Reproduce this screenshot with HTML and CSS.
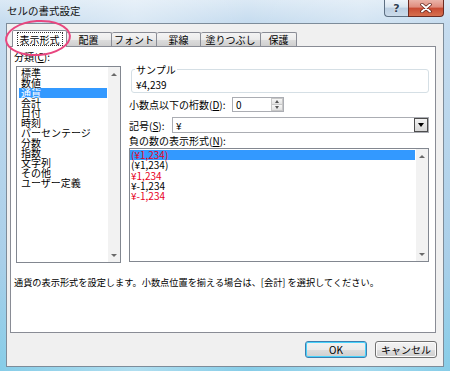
FILE: index.html
```html
<!DOCTYPE html>
<html lang="ja">
<head>
<meta charset="utf-8">
<title>セルの書式設定</title>
<link rel="stylesheet" href="styles.css">
</head>
<body>
<div class="window">
  <div class="titlebar">
    <span class="title">セルの書式設定</span>
    <div class="caption-buttons">
      <div class="cap-btn help">?</div>
      <div class="cap-btn close">
        <svg width="14" height="10" viewBox="0 0 14 10"><path d="M3 1.5 L11 8.5 M11 1.5 L3 8.5" stroke="#5a1c14" stroke-width="3.4" stroke-linecap="round"/><path d="M3 1.5 L11 8.5 M11 1.5 L3 8.5" stroke="#ffffff" stroke-width="2" stroke-linecap="round"/></svg>
      </div>
    </div>
  </div>
  <div class="client">
    <div class="tabs">
      <div class="tab active t1"><span class="focus">表示形式</span></div>
      <div class="tab t2">配置</div>
      <div class="tab t3">フォント</div>
      <div class="tab t4">罫線</div>
      <div class="tab t5">塗りつぶし</div>
      <div class="tab t6">保護</div>
    </div>
    <div class="panel">
      <div class="cols">
        <div class="left">
          <div class="label">分類(<u>C</u>):</div>
          <div class="listbox cat">
            <ul class="items">
              <li>標準</li>
              <li>数値</li>
              <li class="sel">通貨</li>
              <li>会計</li>
              <li>日付</li>
              <li>時刻</li>
              <li>パーセンテージ</li>
              <li>分数</li>
              <li>指数</li>
              <li>文字列</li>
              <li>その他</li>
              <li>ユーザー定義</li>
            </ul>
            <div class="vscroll"><span class="arr up"></span><span class="arr down"></span></div>
          </div>
        </div>
        <div class="right">
          <fieldset class="sample">
            <legend>サンプル</legend>
            <div class="sample-val">¥4,239</div>
          </fieldset>
          <div class="row decimals">
            <span class="rlabel">小数点以下の桁数(<u>D</u>):</span>
            <div class="spin">
              <span class="spin-val">0</span>
              <div class="spin-btns"><span class="sb"><span class="arr up"></span></span><span class="sb"><span class="arr down"></span></span></div>
            </div>
          </div>
          <div class="row symbol">
            <span class="rlabel">記号(<u>S</u>):</span>
            <div class="combo">
              <span class="combo-val">¥</span>
              <div class="drop"><span class="tri"></span></div>
            </div>
          </div>
          <div class="label neg-label">負の数の表示形式(<u>N</u>):</div>
          <div class="listbox neg">
            <ul class="items">
              <li class="sel red">(¥1,234)</li>
              <li>(¥1,234)</li>
              <li class="red">¥1,234</li>
              <li>¥-1,234</li>
              <li class="red">¥-1,234</li>
            </ul>
            <div class="vscroll"><span class="arr up"></span><span class="arr down"></span></div>
          </div>
        </div>
      </div>
      <p class="desc">通貨の表示形式を設定します。小数点位置を揃える場合は、[会計] を選択してください。</p>
    </div>
    <div class="buttons">
      <div class="btn default">OK</div>
      <div class="btn">キャンセル</div>
    </div>
  </div>
  <div class="ellipse"></div>
</div>
</body>
</html>
```
FILE: styles.css
```css
* { box-sizing: border-box; }
html, body { margin: 0; padding: 0; }
body {
  width: 450px;
  height: 371px;
  overflow: hidden;
  font-family: "Noto Sans CJK JP", "Noto Sans", sans-serif;
  font-size: 10px;
  color: #000;
}
.window {
  position: relative;
  width: 450px;
  height: 371px;
  display: flex;
  flex-direction: column;
  background:
    linear-gradient(90deg, rgba(255,255,255,0) 0, rgba(255,255,255,0.35) 30%, rgba(255,255,255,0) 55%, rgba(255,255,255,0.25) 80%, rgba(255,255,255,0) 100%),
    linear-gradient(180deg, #dbe9f5 0, #c6dcef 22px, #a9cfe9 70%, #86cde8 100%);
}
.titlebar {
  height: 23px;
  display: flex;
  align-items: flex-start;
  padding-left: 7px;
}
.title {
  margin-top: 5px;
  font-size: 10.5px;
  line-height: 12px;
  color: #111;
}
.caption-buttons {
  margin-left: auto;
  margin-right: 6px;
  display: flex;
}
.cap-btn {
  height: 17px;
  border: 1px solid #5d6f82;
  border-top: none;
  display: flex;
  align-items: center;
  justify-content: center;
}
.help {
  width: 24px;
  border-radius: 0 0 0 4px;
  border-right: none;
  background: linear-gradient(180deg, #eef4fa 0, #d9e5f0 45%, #bccfe2 50%, #cbdbea 100%);
  font-family: "DejaVu Sans", sans-serif;
  font-weight: bold;
  font-size: 11px;
  color: #2e3f52;
  text-shadow: 0 0 2px #fff;
}
.close {
  width: 36px;
  border-color: #6b2a22;
  border-radius: 0 0 4px 0;
  background: linear-gradient(180deg, #eab3a8 0, #df8c7c 45%, #c84a32 50%, #d6704f 100%);
}
.client {
  margin: 0 6px 0 6px;
  height: 344px;
  background: #f0f0f0;
  border: 1px solid #7d8c9a;
  display: flex;
  flex-direction: column;
}
.tabs {
  margin: 6px 0 0 5px;
  height: 16px;
  display: flex;
  align-items: flex-end;
  position: relative;
  z-index: 2;
}
.tab {
  height: 14px;
  border: 1px solid #898c95;
  border-bottom: none;
  border-left: none;
  background: linear-gradient(180deg, #f4f4f4 0, #ebebeb 50%, #dddddd 51%, #cfcfcf 100%);
  display: flex;
  align-items: center;
  justify-content: center;
  line-height: 11px;
  border-radius: 2px 2px 0 0;
}
.tab.active {
  height: 17px;
  margin-bottom: -1px;
  background: #ffffff;
  border-left: 1px solid #898c95;
  border-right: 1px solid #898c95;
  margin-right: -1px;
  position: relative;
  z-index: 3;
}
.focus {
  border: 1px dotted #333;
  padding: 1px 2px 0;
  line-height: 11px;
}
.t1 { width: 55px; }
.t2 { width: 46px; }
.t3 { width: 45px; }
.t4 { width: 44px; }
.t5 { width: 60px; }
.t6 { width: 36px; }
.panel {
  margin-left: 3px;
  width: 426px;
  height: 287px;
  background: #ffffff;
  border: 1px solid #898c95;
  padding: 4px 0 0 3px;
  position: relative;
  z-index: 1;
}
.cols {
  display: flex;
  gap: 8px;
}
.left { width: 107px; }
.right {
  width: 300px;
  padding-top: 13px;
  display: flex;
  flex-direction: column;
}
.label {
  line-height: 11px;
  height: 11px;
  white-space: nowrap;
}
u { text-decoration: underline; text-underline-offset: 1px; }
.listbox {
  position: relative;
  border: 1px solid #828790;
  background: #fff;
  display: flex;
}
.listbox.cat {
  margin: 4px 0 0 2px;
  width: 105px;
  height: 197px;
}
.listbox.neg {
  margin-top: 2px;
  width: 300px;
  height: 114px;
}
.items {
  list-style: none;
  margin: 0;
  padding: 1px 0 0;
  flex: 1;
}
.items li {
  line-height: 10px;
  height: 10px;
  padding-left: 2px;
  margin: 0 1px 0 2px;
  white-space: nowrap;
}
.listbox.neg .items li {
  margin: 0 1px 0 0;
  height: 10.3px;
  line-height: 10.3px;
  padding-left: 1px;
}
.items li.sel { background: #3399ff; color: #fff; }
.items li.red { color: #e8001c; }
.items li.sel.red { color: #e8001c; }
.vscroll {
  width: 12px;
  background: #f2f2f2;
  display: flex;
  flex-direction: column;
  justify-content: space-between;
  align-items: center;
  padding: 6px 0 5px;
}
.arr {
  width: 0;
  height: 0;
  border-left: 3px solid transparent;
  border-right: 3px solid transparent;
}
.arr.up { border-bottom: 3px solid #6a6a6a; }
.arr.down { border-top: 3px solid #6a6a6a; }
.sample {
  margin: 0 0 0 2px;
  width: 298px;
  border: 1px solid #d5dfe5;
  border-radius: 3px;
  padding: 6px 4px 2px;
}
.sample legend {
  padding: 0 1px;
  margin-left: -1px;
  line-height: 11px;
}
.sample-val { line-height: 10px; height: 10px; margin-top: -1px; }
.row {
  display: flex;
  align-items: center;
}
.rlabel { white-space: nowrap; line-height: 11px; }
.decimals { margin-top: 4px; height: 15px; }
.decimals .rlabel { width: 103px; }
.spin {
  width: 52px;
  height: 15px;
  border: 1px solid #abadb3;
  background: #fff;
  display: flex;
  align-items: center;
}
.spin-val { flex: 1; padding-left: 3px; line-height: 11px; }
.spin-btns {
  width: 12px;
  height: 13px;
  display: flex;
  flex-direction: column;
}
.sb {
  flex: 1;
  display: flex;
  align-items: center;
  justify-content: center;
  background: linear-gradient(180deg, #f7f7f7, #e2e2e2);
  border: 1px solid #c8c8c8;
}
.sb + .sb { border-top: none; }
.sb .arr { border-left-width: 2.5px; border-right-width: 2.5px; }
.sb .arr.up { border-bottom: 3px solid #555; }
.sb .arr.down { border-top: 3px solid #555; }
.symbol { margin-top: 5px; height: 16px; }
.symbol .rlabel { width: 43px; }
.combo {
  width: 257px;
  height: 16px;
  border: 1px solid #abadb3;
  background: #fff;
  display: flex;
  align-items: center;
}
.combo-val { flex: 1; padding-left: 3px; line-height: 11px; }
.drop {
  width: 14px;
  height: 14px;
  border: 1px solid #4d4d4d;
  background: linear-gradient(180deg, #f2f2f2, #d8d8d8);
  display: flex;
  align-items: center;
  justify-content: center;
}
.tri {
  width: 0;
  height: 0;
  border-left: 3.5px solid transparent;
  border-right: 3.5px solid transparent;
  border-top: 4px solid #000;
}
.neg-label { margin-top: 3px; line-height: 10px; height: 10px; }
.desc {
  margin: 14px 0 0;
  line-height: 11px;
  font-size: 9.2px;
  white-space: nowrap;
}
.buttons {
  margin-top: 8px;
  display: flex;
  justify-content: flex-end;
  gap: 8px;
  padding-right: 6px;
}
.btn {
  width: 62px;
  height: 17px;
  border: 1px solid #707070;
  border-radius: 3px;
  background: linear-gradient(180deg, #f2f2f2 0, #ebebeb 50%, #dddddd 51%, #cfcfcf 100%);
  display: flex;
  align-items: center;
  justify-content: center;
  line-height: 11px;
  box-shadow: inset 0 0 0 1px #fcfcfc;
}
.btn.default {
  border-color: #3c7fb1;
  box-shadow: inset 0 0 0 1px #48d2fb;
}
.ellipse {
  position: absolute;
  left: 5px;
  top: 20px;
  width: 66px;
  height: 36px;
  border: 2.5px solid #e8467f;
  border-radius: 50%;
  z-index: 10;
  transform: rotate(-4deg);
}
```
